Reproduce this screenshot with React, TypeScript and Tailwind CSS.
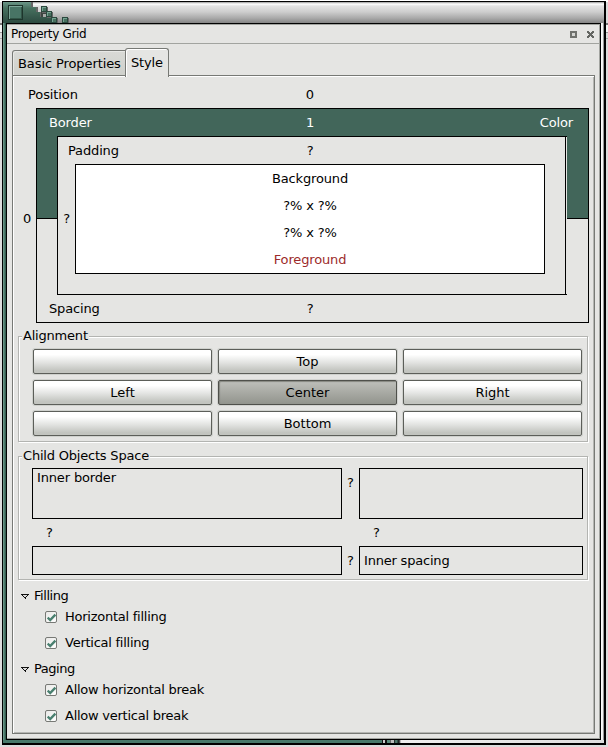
import React from "react";

function Field({ left, value, right, className }: { left: string; value: string; right?: string; className: string }) {
  return (
    <div className={`flex h-[27px] shrink-0 leading-[27px] ${className}`}>
      <span className="flex-1">{left}</span>
      <span className="w-10 text-center">{value}</span>
      <span className="w-[258px] pr-[15px] text-right">{right}</span>
    </div>
  );
}

function Tab({ label, active }: { label: string; active?: boolean }) {
  return (
    <div
      className={
        active
          ? "z-10 -mb-[2px] -ml-px h-[29px] w-[44px] rounded-t-[3px] border border-b-0 border-[#777975] bg-[#e5e5e3] pt-px pl-[5px] leading-[26px] tracking-[-0.15px] shadow-[inset_1px_1px_0_#fff]"
          : "h-[25px] w-[114px] rounded-tl-[3px] border border-b-0 border-[#777975] bg-linear-to-b from-[#d9dad6] to-[#cfd1cc] pl-[5px] leading-[25px] tracking-[-0.09px] whitespace-nowrap shadow-[inset_1px_1px_0_#e8e9e6]"
      }
    >
      {label}
    </div>
  );
}

function Group({ title, className, children }: { title: string; className: string; children: React.ReactNode }) {
  return (
    <section className={`relative ml-[5px] w-[570px] border border-[#b3b4b1] shadow-[1px_1px_0_#fff,inset_1px_1px_0_#fff] ${className}`}>
      <h2 className="absolute -top-[10px] left-[3px] bg-[#e5e5e3] px-px leading-[18px] tracking-[-0.2px]">{title}</h2>
      {children}
    </section>
  );
}

function AlignButton({ label, pressed }: { label?: string; pressed?: boolean }) {
  return (
    <button
      className={`h-[25px] w-[179px] rounded-[2px] border text-center leading-[23px] ${
        pressed
          ? "border-[#4f504b] bg-linear-to-b from-[#bfc0bb] to-[#92948d] shadow-[0_0_0_1px_#d2d3d0,inset_1px_1px_1px_#858780]"
          : "border-[#5c5e59] bg-linear-to-b from-white from-20% via-[#e2e3e1] via-55% to-[#c2c4bf] to-90% shadow-[0_0_0_1px_#cfd1cd]"
      }`}
    >
      {label}
    </button>
  );
}

function Heading({ label }: { label: string }) {
  return (
    <div className="flex h-[18px] items-center pl-2 leading-[18px] tracking-[-0.45px]">
      <svg width="8" height="5" viewBox="0 0 8 5" className="mr-[5px]" shapeRendering="crispEdges">
        <path d="M0 0h8v1H7v1H6v1H5v1H4.5v1h-1V4H3V3H2V2H1V1H0z" fill="#111" />
        <path d="M2 1h4v1H5v1H3V2H2z" fill="#ddd" />
      </svg>
      {label}
    </div>
  );
}

function Check({ label }: { label: string }) {
  return (
    <label className="flex h-[26px] items-center pl-8 leading-[26px] tracking-[-0.25px]">
      <span className="mr-2 flex h-3 w-3 items-center justify-center rounded-[2px] border border-[#777975] bg-linear-to-br from-[#e9e9e7] to-white">
        <svg width="9" height="9" viewBox="0 0 9 9">
          <path d="M0.7 4.6 3.2 7 8.4 1.6" fill="none" stroke="#4a8070" strokeWidth="2.4" />
        </svg>
      </span>
      {label}
    </label>
  );
}

const pixels = [
  [41, 6], [46, 11], [51, 17], [62, 17],
];

function TitleBar() {
  return (
    <header className="h-[21px] w-full bg-[linear-gradient(#999_0,#fff_2px,#e2e2e2_4px,#cdcdcd_10px,#aaa_16px,#858585_21px)]">
      <svg width="72" height="21" viewBox="3 2 72 21" shapeRendering="crispEdges">
        <defs>
          <linearGradient id="corner" x1="0" y1="0" x2="0" y2="1">
            <stop offset="0" stopColor="#6b9687" />
            <stop offset="0.3" stopColor="#47705f" />
            <stop offset="1" stopColor="#2c4a40" />
          </linearGradient>
        </defs>
        <path d="M31 2h2v5h5v5h4v5h11v6H31z" fill="#666" />
        <path d="M3 2h28v5h5v5h4v5h11v6H3z" fill="url(#corner)" />
        <rect x="8" y="5" width="15" height="15" fill="#1d352c" />
        <rect x="9" y="6" width="13" height="13" fill="#7ba596" />
        <rect x="10" y="7" width="12" height="12" fill="#315446" />
        <rect x="10" y="7" width="11" height="11" fill="#487465" />
        <rect x="41" y="12" width="5" height="5" fill="#3d4541" />
        <rect x="43" y="14" width="3" height="3" fill="#a9aba9" />
        {pixels.map(([x, y]) => (
          <g key={`${x}-${y}`}>
            <rect x={x + 1} y={y + 1} width="6" height="6" fill="#666" />
            <rect x={x} y={y} width="6" height="6" fill="#2b493e" />
            <rect x={x + 1} y={y + 1} width="4" height="4" fill="#75a392" />
            <rect x={x + 2} y={y + 2} width="3" height="3" fill="#48705f" />
          </g>
        ))}
      </svg>
    </header>
  );
}

export default function App() {
  return (
    <div className="h-[747px] w-[608px] overflow-hidden bg-[linear-gradient(#fff_0,#fff_2px,#dcdcdc_2px,#dcdcdc_23px,#777_23px,#777_25px,#f5f5f5_25px,#f5f5f5_32px,#999_32px,#999_33px,#ddd_33px,#ddd_38px,#aaa_38px,#aaa_39px,#dcdcdc_39px)] pt-px pl-[2px] font-['DejaVu_Sans',sans-serif] text-[13px] text-black">
      <div className="flex h-[744px] w-[604px] flex-col border border-r-2 border-b-2 border-black">
        <TitleBar />
        <div className="flex h-[717px]">
          <div className="w-[3px] bg-linear-to-r from-[#79a394] via-[#4b796a] to-[#2c5143]" />
          <main className="h-[717px] w-[595px] border border-black bg-[#e5e5e3]">
            <div className="h-[715px] w-[593px] border-t border-r border-b border-[#a2a4a0]">
              <div className="flex h-[19px] items-center border-b border-[#a2a4a0] pl-1 text-[12px] tracking-[-0.35px]">
                <span className="flex-1">Property Grid</span>
                <svg width="25" height="9" viewBox="0 0 25 9" className="mr-[5px]" shapeRendering="crispEdges">
                  <path d="M1 1h7v7H1z" fill="#70726e" />
                  <path d="M3 3h3v3H3z" fill="#d4d5d2" />
                  <path d="M18 1h2v1h1v1h1V2h1V1h2v2h-1v1h-1v1h1v1h1v2h-2V7h-1V6h-1v1h-1v1h-2V6h1V5h1V4h-1V3h-1z" fill="#646662" />
                </svg>
              </div>
              <div className="mt-1 ml-[5px] flex h-[27px] items-end">
                <Tab label="Basic Properties" />
                <Tab label="Style" active />
              </div>
              <div className="ml-[5px] h-[659px] w-[583px] border border-[#777975] shadow-[inset_1px_1px_0_#fff,inset_-1px_-1px_0_#b5b6b3]">
                <div className="flex h-8 pt-[5px] pl-[15px] leading-[27px]">
                  <span className="w-[262px] tracking-[-0.1px]">Position</span>
                  <span className="w-10 text-center">0</span>
                </div>
                <div className="flex h-[215px] tracking-[-0.15px]">
                  <div className="flex w-[23px] items-center justify-center pt-[7px] pl-[5px]">0</div>
                  <div className="flex w-[553px] flex-col border border-black">
                    <Field left="Border" value="1" right="Color" className="bg-[#42665a] pl-3 text-white" />
                    <div className="flex h-[159px]">
                      <div className="w-5"><div className="h-[83px] border-b border-black bg-[#42665a]" /></div>
                      <div className="w-[510px] border border-r-0 border-black">
                        <div className="h-[157px] w-[508px] border-r border-black">
                          <div className="flex h-[27px] pl-[10px] leading-[27px]">
                            <span className="w-[222px]">Padding</span>
                            <span className="w-10 text-center">?</span>
                          </div>
                          <div className="flex h-[110px]">
                            <div className="w-[17px] text-center leading-[110px]">?</div>
                            <div className="w-[470px] border border-black bg-white text-center leading-[27px]">
                              <p>Background</p>
                              <p>?% x ?%</p>
                              <p>?% x ?%</p>
                              <p className="text-[#9c2b2b]">Foreground</p>
                            </div>
                          </div>
                        </div>
                      </div>
                      <div className="w-[21px]"><div className="h-[83px] border-b border-black bg-[#42665a]" /></div>
                    </div>
                    <Field left="Spacing" value="?" className="pl-3" />
                  </div>
                </div>
                <Group title="Alignment" className="mt-[13px] h-[106px]">
                  <div className="mt-3 ml-[14px] grid grid-cols-[179px_179px_179px] gap-[6px]">
                    <AlignButton /><AlignButton label="Top" /><AlignButton />
                    <AlignButton label="Left" /><AlignButton label="Center" pressed /><AlignButton label="Right" />
                    <AlignButton /><AlignButton label="Bottom" /><AlignButton />
                  </div>
                </Group>
                <Group title="Child Objects Space" className="mt-[14px] h-[124px]">
                  <div className="mt-[11px] ml-[13px] flex h-[51px]">
                    <div className="w-[310px] border border-black pl-1 leading-[18px] tracking-[-0.15px]">Inner border</div>
                    <span className="w-[17px] pt-[6px] text-center leading-[18px]">?</span>
                    <div className="w-[224px] border border-black" />
                  </div>
                  <div className="ml-[13px] flex h-[27px] leading-[27px]">
                    <span className="w-[327px] pl-[14px]">?</span>
                    <span className="pl-[14px]">?</span>
                  </div>
                  <div className="ml-[13px] flex h-[29px] leading-[27px]">
                    <div className="w-[310px] border border-black" />
                    <span className="w-[17px] pt-px text-center">?</span>
                    <div className="w-[224px] border border-black pl-1 tracking-[-0.2px]">Inner spacing</div>
                  </div>
                </Group>
                <div className="mt-[7px]">
                  <Heading label="Filling" />
                  <div className="-mt-px">
                    <Check label="Horizontal filling" />
                    <Check label="Vertical filling" />
                  </div>
                  <div className="h-1" />
                  <Heading label="Paging" />
                  <div className="-mt-px">
                    <Check label="Allow horizontal break" />
                    <Check label="Allow vertical break" />
                  </div>
                </div>
              </div>
            </div>
          </main>
          <div className="w-[3px] bg-[linear-gradient(to_right,#fff_0,#eee_2px,#999_2px)]" />
        </div>
        <footer className="h-[3px] bg-[linear-gradient(to_right,#47796a_0,#47796a_379px,#111_379px,#111_380px,#ccc_380px,#ccc_382px,#111_382px,#111_384px,#5b8c7d_384px,#5b8c7d_387px,#111_387px,#bbb_388px,#bbb_391px,#111_391px,#5b8c7d_393px,#111_396px,#eee_398px,#ddd_100%)]" />
      </div>
    </div>
  );
}
